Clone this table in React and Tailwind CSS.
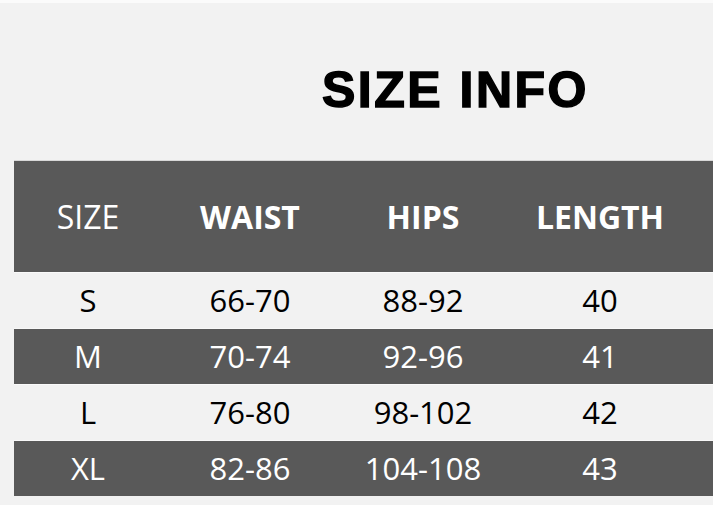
const header = ['SIZE', 'WAIST', 'HIPS', 'LENGTH'];

const rows = [
    ['S', '66-70', '88-92', '40'],
    ['M', '70-74', '92-96', '41'],
    ['L', '76-80', '98-102', '42'],
    ['XL', '82-86', '104-108', '43'],
];

const colWidths = ['w-[148px]', 'w-[176px]', 'w-[170px]', 'w-[184px]'];

const App = () => {
    return (
        <div className="w-[713px] h-[505px] overflow-hidden bg-[#f2f2f2] font-['Open_Sans',sans-serif]">
            <div className="h-[3px] bg-[#fbfbfb]" />

            {/* title */}
            <div className="h-[157px] flex items-center pl-[322px] pt-[16px]">
                <h1 className="font-['Liberation_Sans',Arial,sans-serif] font-bold text-[50px] leading-none tracking-[2.5px] text-black [-webkit-text-stroke:1.5px_black]">
                    SIZE INFO
                </h1>
            </div>

            {/* table */}
            <div className="ml-[14px]">
                <div className="h-[112px] flex items-center bg-[#595959] text-white text-[32px] border-t border-[#d8d8d8]">
                    {header.map((h, i) => (
                        <div
                            key={h}
                            className={`${colWidths[i]} text-center ${i === 0 ? 'font-normal' : 'font-bold'}`}
                        >
                            {h}
                        </div>
                    ))}
                </div>

                {rows.map((row, r) => (
                    <div
                        key={row[0]}
                        className={`h-[56px] flex items-center text-[31px] border-t ${
                            r % 2 === 1
                                ? 'bg-[#595959] text-white border-[#f8f8f8]'
                                : 'bg-[#f2f2f2] text-black border-[#fafafa]'
                        }`}
                    >
                        {row.map((cell, i) => (
                            <div key={i} className={`${colWidths[i]} text-center leading-none`}>
                                {cell}
                            </div>
                        ))}
                    </div>
                ))}
            </div>
        </div>
    );
};

export default App;
